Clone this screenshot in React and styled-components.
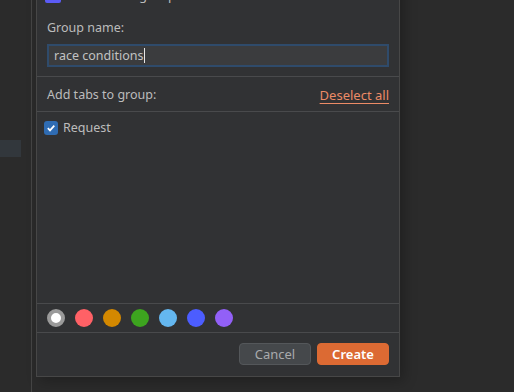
import React from "react";
import styled, { createGlobalStyle } from "styled-components";

const Global = createGlobalStyle`
  html, body { margin: 0; padding: 0; background: #2b2b2b; overflow: hidden; }
  body { font-family: "Noto Sans", "Open Sans", sans-serif; }
  #root { width: 514px; height: 392px; }
`;

const Page = styled.div`
  position: relative;
  width: 514px;
  height: 392px;
  display: flex;
  background: #2b2b2b;
  overflow: hidden;
`;

const Sidebar = styled.div`
  width: 32px;
  display: flex;
  flex-direction: column;
  padding-top: 140px;
  border-right: 1px solid #454545;
  box-sizing: border-box;
`;

const SideItem = styled.div`
  width: 21px;
  height: 17px;
  background: #32373c;
`;

const Dialog = styled.div`
  position: absolute;
  left: 36px;
  top: -22px;
  width: 364px;
  height: 399px;
  box-sizing: border-box;
  background: #313234;
  border: 1px solid #474747;
  display: flex;
  flex-direction: column;
  color: #bcbcbc;
  font-size: 12.5px;
  box-shadow: 4px 4px 12px rgba(0, 0, 0, 0.25);
`;

const Section = styled.div`
  display: flex;
  flex-direction: ${(p) => (p.$row ? "row" : "column")};
  align-items: ${(p) => (p.$row ? "center" : "stretch")};
  justify-content: ${(p) => (p.$end ? "flex-end" : p.$between ? "space-between" : "flex-start")};
  gap: ${(p) => p.$gap || 0}px;
  padding: ${(p) => p.$pad};
  border-bottom: ${(p) => (p.$line ? "1px solid #494a4c" : "none")};
  flex: ${(p) => (p.$grow ? 1 : "none")};
`;

const TopRow = styled.div`
  display: flex;
  align-items: center;
  gap: 6px;
  height: 16px;
  padding: 8px 0 0 8px;
  line-height: 16px;
  font-size: 13px;
`;

const PurpleBox = styled.div`
  width: 16px;
  height: 16px;
  border-radius: 2px;
  background: #5b5bf5;
`;

const Label = styled.div`
  line-height: 16px;
  color: #bcbcbc;
`;

const Input = styled.div`
  height: 23px;
  box-sizing: border-box;
  background: #3b3c3e;
  border: 2px solid #2f4b6b;
  display: flex;
  align-items: center;
  padding-left: 5px;
  color: #c2c2c2;
`;

const Caret = styled.span`
  display: inline-block;
  width: 1px;
  height: 15px;
  background: #e6e6e6;
  margin-left: 1px;
`;

const Link = styled.span`
  color: #ec8b66;
  font-size: 13px;
  text-decoration: underline;
  text-underline-offset: 3px;
`;

const CheckRow = styled.div`
  display: flex;
  align-items: center;
  gap: 5px;
  line-height: 16px;
`;

const Check = styled.div`
  width: 14px;
  height: 14px;
  border-radius: 3px;
  background: #2f6cb3;
  display: flex;
  align-items: center;
  justify-content: center;
`;

const Dot = styled.div`
  width: 18px;
  height: 18px;
  border-radius: 50%;
  background: ${(p) => p.$c};
  box-sizing: border-box;
  border: ${(p) => (p.$sel ? "4px solid #9a9a9a" : "none")};
`;

const Button = styled.button`
  height: 22px;
  width: ${(p) => p.$w}px;
  box-sizing: border-box;
  border-radius: 4px;
  font-family: inherit;
  font-size: 13px;
  padding: 0;
  cursor: pointer;
  background: ${(p) => (p.$primary ? "#dc6a33" : "#45484b")};
  border: 1px solid ${(p) => (p.$primary ? "#dc6a33" : "#54575a")};
  color: ${(p) => (p.$primary ? "#ffffff" : "#a9abad")};
  font-weight: ${(p) => (p.$primary ? 600 : 400)};
`;

const colors = ["#ffffff", "#ff6166", "#d38800", "#3da41f", "#64b7f0", "#4c5dff", "#9260f7"];

export default function App() {
  return (
    <Page>
      <Global />
      <Sidebar>
        <SideItem />
      </Sidebar>
      <Dialog>
        <TopRow>
          <PurpleBox />
          <Label>Create new group</Label>
        </TopRow>
        <Section $pad="17px 10px 9px 10px" $gap={8} $line>
          <Label>Group name:</Label>
          <Input>
            race conditions<Caret />
          </Input>
        </Section>
        <Section $row $between $pad="9px 10px 7px 10px" $line>
          <Label>Add tabs to group:</Label>
          <Link>Deselect all</Link>
        </Section>
        <Section $pad="8px 7px 7px" $grow $line>
          <CheckRow>
            <Check>
              <svg width="10" height="10" viewBox="0 0 10 10">
                <path d="M1.8 5.2 L4 7.4 L8.3 2.6" fill="none" stroke="#ffffff" strokeWidth="1.7" />
              </svg>
            </Check>
            <Label>Request</Label>
          </CheckRow>
        </Section>
        <Section $row $gap={10} $pad="5px 10px 5px 10px" $line>
          {colors.map((c, i) => (
            <Dot key={c} $c={c} $sel={i === 0} />
          ))}
        </Section>
        <Section $row $end $pad="10px 10px 11px 10px" $gap={6}>
          <Button $w={72}>Cancel</Button>
          <Button $w={72} $primary>Create</Button>
        </Section>
      </Dialog>
    </Page>
  );
}
